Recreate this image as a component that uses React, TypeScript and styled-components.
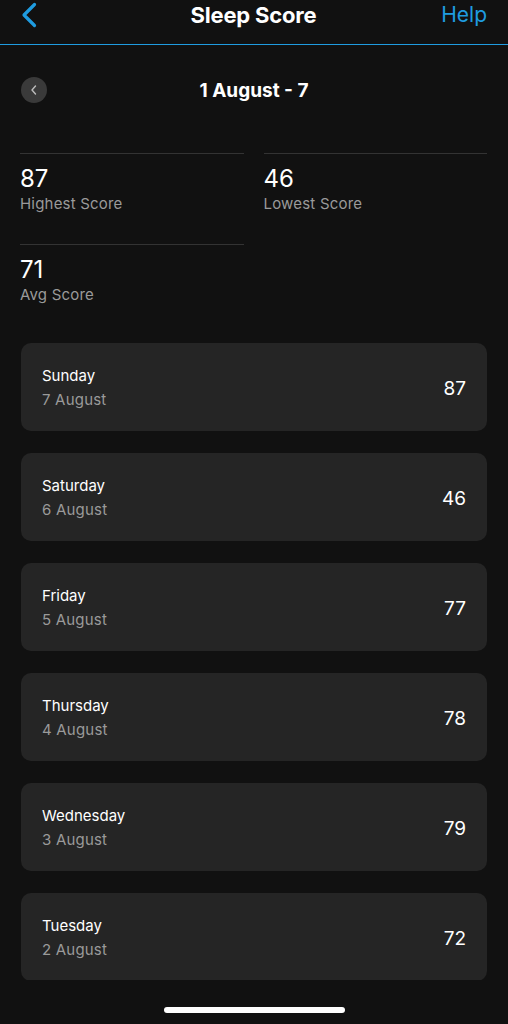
import React from "react";
import styled, { createGlobalStyle } from "styled-components";

const Global = createGlobalStyle`
  html, body { margin: 0; padding: 0; background: #111111; }
  body { font-family: Inter, "Open Sans", "Liberation Sans", sans-serif; -webkit-font-smoothing: antialiased; }
  * { box-sizing: border-box; }
`;

const Screen = styled.div`
  height: 1024px;
  display: flex;
  flex-direction: column;
  background: #111111;
  color: #ffffff;
  overflow: hidden;
`;

const Header = styled.header`
  height: 45px;
  flex: none;
  display: grid;
  grid-template-columns: 80px 1fr 80px;
  align-items: start;
  padding: 2px 21px 0 20px;
  border-bottom: 1.5px solid #1f9ce0;
`;

const BackButton = styled.button`
  background: none;
  border: 0;
  padding: 0;
  height: 26px;
  display: flex;
  align-items: center;
  justify-self: start;
  cursor: pointer;
`;

const Title = styled.h1`
  margin: 0;
  text-align: center;
  font-size: 22px;
  line-height: 26px;
  font-weight: 700;
  letter-spacing: -0.2px;
  color: #ffffff;
`;

const HelpLink = styled.span`
  justify-self: end;
  font-size: 21px;
  line-height: 26px;
  font-weight: 400;
  color: #1f9ce0;
`;

const Content = styled.main`
  flex: 1;
  overflow: hidden;
  display: flex;
  flex-direction: column;
`;

const DateRow = styled.div`
  display: grid;
  grid-template-columns: 26px 1fr 26px;
  align-items: center;
  padding: 32px 21px 0 21px;
`;

const CircleButton = styled.button`
  width: 26px;
  height: 26px;
  border-radius: 50%;
  border: 0;
  padding: 0;
  background: #3a3a3a;
  display: flex;
  align-items: center;
  justify-content: center;
`;

const DateLabel = styled.div`
  text-align: center;
  font-size: 19px;
  font-weight: 700;
  color: #ffffff;
`;

const StatsGrid = styled.section`
  display: grid;
  grid-template-columns: 1fr 1fr;
  column-gap: 20px;
  padding: 50px 21px 0 20px;
`;

const Stat = styled.div`
  border-top: 1.5px solid #333333;
  height: 91px;
  padding-top: 10px;
  display: flex;
  flex-direction: column;
`;

const StatValue = styled.div`
  font-size: 24px;
  line-height: 30px;
  font-weight: 400;
  color: #ffffff;
`;

const StatLabel = styled.div`
  font-size: 15px;
  line-height: 20px;
  letter-spacing: 0.2px;
  color: #9a9a9a;
`;

const List = styled.section`
  display: flex;
  flex-direction: column;
  gap: 22px;
  padding: 8px 21px 0 21px;
  height: 645px;
  overflow: hidden;
`;

const Card = styled.div`
  flex: none;
  height: 88px;
  border-radius: 10px;
  background: #252525;
  display: flex;
  align-items: center;
  justify-content: space-between;
  padding: 2px 21px 0 21px;
`;

const DayBlock = styled.div`
  display: flex;
  flex-direction: column;
  gap: 4px;
`;

const DayName = styled.div`
  font-size: 15px;
  line-height: 20px;
  color: #ffffff;
`;

const DayDate = styled.div`
  font-size: 15px;
  line-height: 20px;
  letter-spacing: 0.2px;
  color: #9a9a9a;
`;

const Score = styled.div`
  font-size: 19px;
  color: #ffffff;
`;

const HomeArea = styled.div`
  flex: none;
  height: 44px;
  display: flex;
  justify-content: center;
  padding-top: 27px;
`;

const HomeBar = styled.div`
  width: 181px;
  height: 6px;
  border-radius: 3px;
  background: #ffffff;
`;

const days = [
  { name: "Sunday", date: "7 August", score: 87 },
  { name: "Saturday", date: "6 August", score: 46 },
  { name: "Friday", date: "5 August", score: 77 },
  { name: "Thursday", date: "4 August", score: 78 },
  { name: "Wednesday", date: "3 August", score: 79 },
  { name: "Tuesday", date: "2 August", score: 72 },
];

const stats = [
  { value: 87, label: "Highest Score" },
  { value: 46, label: "Lowest Score" },
  { value: 71, label: "Avg Score" },
];

export default function App() {
  return (
    <>
      <Global />
      <Screen>
        <Header>
          <BackButton aria-label="Back">
            <svg width="18" height="26" viewBox="0 0 18 26">
              <path d="M14.5 2.5 L4 13 L14.5 23.5" fill="none" stroke="#1f9ce0" strokeWidth="3.2" strokeLinecap="round" strokeLinejoin="round" />
            </svg>
          </BackButton>
          <Title>Sleep Score</Title>
          <HelpLink>Help</HelpLink>
        </Header>
        <Content>
          <DateRow>
            <CircleButton aria-label="Previous">
              <svg width="10" height="12" viewBox="0 0 10 12">
                <path d="M6.5 2 L3 6 L6.5 10" fill="none" stroke="#bdbdbd" strokeWidth="1.4" strokeLinecap="round" strokeLinejoin="round" />
              </svg>
            </CircleButton>
            <DateLabel>1 August - 7</DateLabel>
            <span />
          </DateRow>
          <StatsGrid>
            {stats.map((s) => (
              <Stat key={s.label}>
                <StatValue>{s.value}</StatValue>
                <StatLabel>{s.label}</StatLabel>
              </Stat>
            ))}
          </StatsGrid>
          <List>
            {days.map((d) => (
              <Card key={d.name}>
                <DayBlock>
                  <DayName>{d.name}</DayName>
                  <DayDate>{d.date}</DayDate>
                </DayBlock>
                <Score>{d.score}</Score>
              </Card>
            ))}
          </List>
        </Content>
        <HomeArea>
          <HomeBar />
        </HomeArea>
      </Screen>
    </>
  );
}
